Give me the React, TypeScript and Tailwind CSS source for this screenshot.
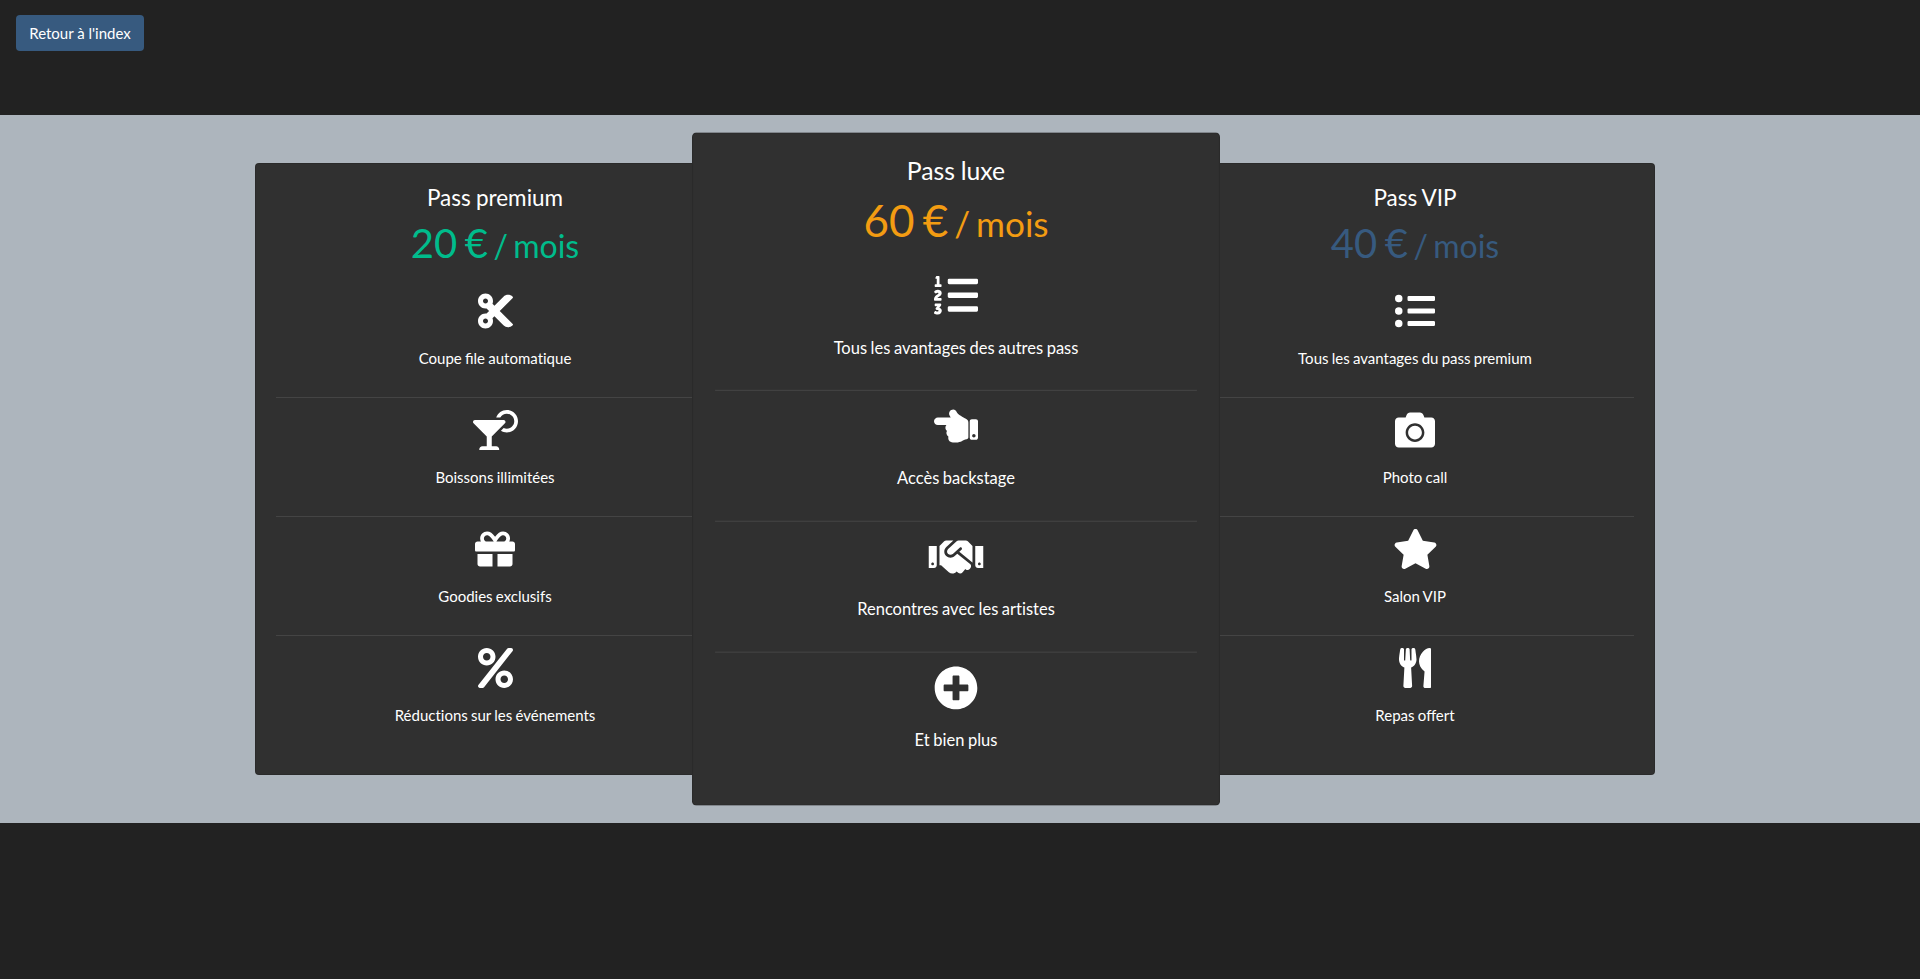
import type { ReactNode } from "react";
import type { IconType } from "react-icons";
import {
  FaCamera,
  FaCocktail,
  FaCut,
  FaGift,
  FaHandPointLeft,
  FaHandshake,
  FaListOl,
  FaListUl,
  FaPercent,
  FaPlusCircle,
  FaStar,
  FaUtensils,
} from "react-icons/fa";

type Feature = { icon: IconType; width: string; label: ReactNode };
type Plan = { name: string; price: string; color: string; frame: string; features: Feature[] };

function Plain({ children }: { children: ReactNode }) {
  return <span className="[font-variant-ligatures:none]">{children}</span>;
}

const plans: Plan[] = [
  {
    name: "Pass premium",
    price: "20 €",
    color: "text-[#00bc8c]",
    frame: "",
    features: [
      { icon: FaCut, width: "w-[35px]", label: <>Coupe file <Plain>automatique</Plain></> },
      { icon: FaCocktail, width: "w-[45px]", label: "Boissons illimitées" },
      { icon: FaGift, width: "w-10", label: "Goodies exclusifs" },
      { icon: FaPercent, width: "w-[35px]", label: <Plain>Réductions sur les événements</Plain> },
    ],
  },
  {
    name: "Pass luxe",
    price: "60 €",
    color: "text-[#f39c12]",
    frame: "z-10 scale-110 -ml-[19px] -mr-[21px]",
    features: [
      { icon: FaListOl, width: "w-10", label: "Tous les avantages des autres pass" },
      { icon: FaHandPointLeft, width: "w-10", label: "Accès backstage" },
      { icon: FaHandshake, width: "w-[50px]", label: <Plain>Rencontres avec les artistes</Plain> },
      { icon: FaPlusCircle, width: "w-10", label: "Et bien plus" },
    ],
  },
  {
    name: "Pass VIP",
    price: "40 €",
    color: "text-[#375a7f]",
    frame: "",
    features: [
      { icon: FaListUl, width: "w-10", label: "Tous les avantages du pass premium" },
      { icon: FaCamera, width: "w-10", label: "Photo call" },
      { icon: FaStar, width: "w-[45px]", label: "Salon VIP" },
      { icon: FaUtensils, width: "w-[32.5px]", label: "Repas offert" },
    ],
  },
];

function FeatureRow({ icon: Icon, width, label }: Feature) {
  return (
    <li className="flex h-[119px] flex-col items-center border-b border-[#444] pt-3 last:border-b-0">
      <Icon className={`h-10 shrink-0 ${width}`} />
      <p className="mt-4 leading-[22.5px]">{label}</p>
    </li>
  );
}

function PlanCard({ plan }: { plan: Plan }) {
  return (
    <article
      className={`h-[612px] w-[480px] shrink-0 rounded border border-black/[.125] bg-[#303030] bg-clip-border p-5 text-center ${plan.frame}`}
    >
      <h4 className="text-[22.5px] leading-[27px]">{plan.name}</h4>
      <h1 className={`mt-2 h-[60px] text-[40px] leading-[48px] [word-spacing:-0.065em] ${plan.color}`}>
        {plan.price}<span className="text-[32px] [word-spacing:-0.09em]"> / mois</span>
      </h1>
      <ul>
        {plan.features.map((feature, index) => (
          <FeatureRow key={index} {...feature} />
        ))}
      </ul>
    </article>
  );
}

export default function App() {
  return (
    <div className="h-[979px] overflow-hidden bg-[#222] font-[Lato,sans-serif] text-[15px] text-white [word-spacing:-0.04em]">
      <header className="h-[115px] px-4 pt-[15px]">
        <button className="h-9 w-32 rounded bg-[#375a7f] text-[15px] leading-[22.5px]">Retour à l'index</button>
      </header>
      <main className="flex h-[708px] bg-[#adb5bd] py-12 pl-[255px]">
        {plans.map((plan) => (
          <PlanCard key={plan.name} plan={plan} />
        ))}
      </main>
    </div>
  );
}
